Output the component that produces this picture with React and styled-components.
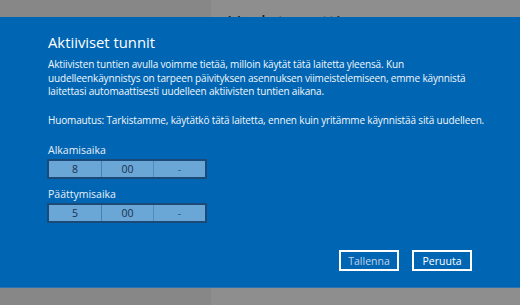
import React from "react";
import styled, { createGlobalStyle } from "styled-components";

const GlobalStyle = createGlobalStyle`
  html, body {
    margin: 0;
    padding: 0;
    width: 520px;
    height: 305px;
    overflow: hidden;
    font-family: "Open Sans", "Noto Sans", sans-serif;
  }
`;

const Page = styled.div`
  position: relative;
  width: 520px;
  height: 305px;
  display: flex;
  background: #8e8e8e;
`;

const Sidebar = styled.div`
  width: 211px;
  background: #878787;
`;

const Pane = styled.div`
  flex: 1;
  padding: 9px 0 0 16px;
`;

const PaneTitle = styled.h1`
  margin: 0;
  font-family: "Open Sans", sans-serif;
  font-weight: 400;
  font-size: 20px;
  color: #1c1c1c;
`;

const Dialog = styled.div`
  position: absolute;
  top: 17px;
  left: 0;
  right: 0;
  height: 271px;
  box-sizing: border-box;
  background: #0066b3;
  border-bottom: 1px solid #2d73ad;
  padding: 14px 12px 0 48px;
  color: #fff;
  display: flex;
  flex-direction: column;
`;

const Title = styled.h2`
  margin: 0 0 5px 0;
  font-weight: 400;
  font-size: 14.8px;
  line-height: 22px;
`;

const Text = styled.p`
  margin: 0 0 ${({ $gap }) => $gap}px 0;
  max-width: 460px;
  font-size: 10px;
  letter-spacing: -0.15px;
  line-height: 13.5px;
  color: #f2f6fa;
`;

const Label = styled.div`
  font-size: 10.5px;
  line-height: 14px;
  margin-bottom: 2px;
  color: #e8eef6;
`;

const TimeBox = styled.div`
  display: grid;
  grid-template-columns: repeat(3, 1fr);
  width: 160px;
  height: 20px;
  box-sizing: border-box;
  border: 2px solid #1b4a78;
  background: #6aa6d6;
  margin-bottom: ${({ $gap }) => $gap}px;
  margin-left: -1px;
`;

const Cell = styled.div`
  display: flex;
  align-items: center;
  justify-content: center;
  font-size: 10.5px;
  color: #18304d;
  border-left: ${({ $first }) => ($first ? "none" : "1px solid #4d7fab")};
  opacity: ${({ $dim }) => ($dim ? 0.7 : 1)};
`;

const Footer = styled.div`
  margin-top: auto;
  margin-bottom: 16px;
  margin-right: 36px;
  display: flex;
  justify-content: flex-end;
  gap: 13px;
`;

const Button = styled.button`
  width: 60px;
  height: 21px;
  box-sizing: border-box;
  border: 2px solid #fff;
  background: transparent;
  color: ${({ $muted }) => ($muted ? "#c3d2e6" : "#fff")};
  font-family: "Open Sans", sans-serif;
  font-size: 10.5px;
  padding: 0;
`;

export default function App() {
  return (
    <>
      <GlobalStyle />
      <Page>
        <Sidebar />
        <Pane>
          <PaneTitle>Update settings</PaneTitle>
        </Pane>
        <Dialog>
          <Title>Aktiiviset tunnit</Title>
          <Text $gap={15}>
            Aktiivisten tuntien avulla voimme tietää, milloin käytät tätä laitetta yleensä. Kun
            <br />
            uudelleenkäynnistys on tarpeen päivityksen asennuksen viimeistelemiseen, emme käynnistä
            <br />
            laitettasi automaattisesti uudelleen aktiivisten tuntien aikana.
          </Text>
          <Text $gap={16}>
            Huomautus: Tarkistamme, käytätkö tätä laitetta, ennen kuin yritämme käynnistää sitä uudelleen.
          </Text>
          <Label>Alkamisaika</Label>
          <TimeBox $gap={8}>
            <Cell $first>8</Cell>
            <Cell>00</Cell>
            <Cell $dim>-</Cell>
          </TimeBox>
          <Label>Päättymisaika</Label>
          <TimeBox $gap={0}>
            <Cell $first>5</Cell>
            <Cell>00</Cell>
            <Cell $dim>-</Cell>
          </TimeBox>
          <Footer>
            <Button $muted>Tallenna</Button>
            <Button>Peruuta</Button>
          </Footer>
        </Dialog>
      </Page>
    </>
  );
}
